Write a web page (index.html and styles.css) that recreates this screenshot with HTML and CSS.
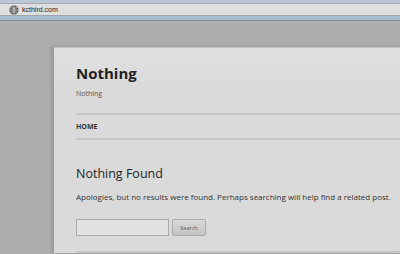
FILE: index.html
```html
<!DOCTYPE html>
<html lang="en">
<head>
    <meta charset="UTF-8">
    <title>Nothing</title>
    <link rel="stylesheet" href="styles.css">
</head>
<body>
    <div class="chrome">
        <div class="address">
            <svg class="globe" width="10" height="10" viewBox="0 0 10 10">
                <circle cx="5" cy="5" r="4.5" fill="#555"/>
                <path d="M1 5h8M5 0.5v9M2 2.5c2 1 4 1 6 0M2 7.5c2 -1 4 -1 6 0" stroke="#ddd" stroke-width="0.8" fill="none"/>
            </svg>
            <span class="url">kcthird.com</span>
        </div>
        <div class="band"></div>
    </div>

    <div class="desk">
        <div class="page">
            <h1 class="site-title">Nothing</h1>
            <p class="site-desc">Nothing</p>

            <nav class="menu">
                <a href="#">HOME</a>
            </nav>

            <h2 class="entry-title">Nothing Found</h2>
            <p class="entry">Apologies, but no results were found. Perhaps searching will help find a related post.</p>

            <form class="search">
                <input type="text" class="field">
                <button type="button" class="submit">Search</button>
            </form>
            <div class="rule"></div>
        </div>
    </div>
</body>
</html>
```

FILE: styles.css
```css
body {
    margin: 0;
    width: 400px;
    height: 254px;
    overflow: hidden;
    background: #adadad;
    font-family: "Open Sans", "DejaVu Sans", sans-serif;
}
.chrome {
    background: #b9c7d6;
    padding-top: 3px;
}
.address {
    height: 11px;
    background: #dfdfdf;
    border-top: 1px solid #a3a9b0;
    border-bottom: 1px solid #9ea6ae;
    display: flex;
    align-items: center;
    padding-left: 9px;
}
.globe { margin-right: 3px; }
.url {
    font-family: "Liberation Sans", sans-serif;
    font-size: 7px;
    color: #222;
}
.band {
    height: 4px;
    background: #a9bbcf;
    border-bottom: 1px solid #7f8c99;
}
.desk {
    padding: 26px 0 0 54px;
}
.page {
    background: linear-gradient(#e0e0e0, #dadada 40px, #dadada);
    box-shadow: -2px 0 4px rgba(0,0,0,0.15);
    border-top: 1px solid #c4c4c4;
    padding: 15px 0 0 22px;
    height: 190px;
}
.site-title {
    margin: 0;
    font-size: 15px;
    font-weight: bold;
    color: #222;
    line-height: 20px;
}
.site-desc {
    margin: 6px 0 0;
    font-size: 7px;
    color: #555;
    line-height: 10px;
}
.menu {
    margin-top: 14px;
    border-top: 2px solid #c6c6c6;
    border-bottom: 2px solid #c6c6c6;
    height: 23px;
    display: flex;
    align-items: center;
}
.menu a {
    font-size: 7px;
    font-weight: bold;
    color: #333;
    text-decoration: none;
}
.entry-title {
    margin: 26px 0 0;
    font-size: 12.5px;
    font-weight: normal;
    color: #222;
    line-height: 16px;
}
.entry {
    margin: 9px 0 0;
    font-size: 8px;
    color: #333;
    line-height: 12px;
}
.search {
    margin-top: 16px;
    display: flex;
    gap: 3px;
}
.field {
    width: 91px;
    height: 15px;
    margin: 0;
    padding: 0;
    border: 1px solid #aaa;
    background: #e2e2e2;
}
.submit {
    width: 34px;
    height: 17px;
    padding: 0;
    border: 1px solid #aaa;
    border-radius: 2px;
    background: linear-gradient(#d8d8d8, #c4c4c4);
    font-family: "Open Sans", sans-serif;
    font-size: 5.5px;
    color: #555;
}
.rule {
    margin-top: 15px;
    border-top: 2px solid #c6c6c6;
}
```
